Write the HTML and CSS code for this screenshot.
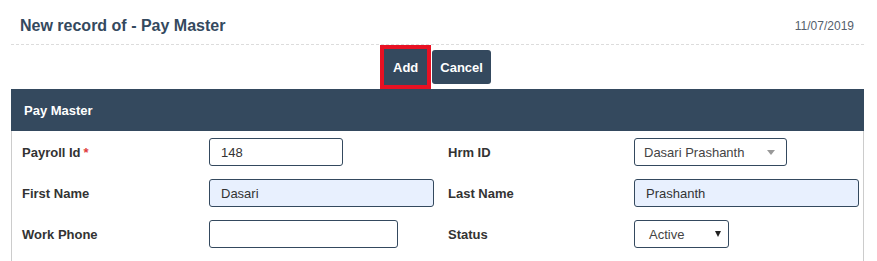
FILE: index.html
```html
<!DOCTYPE html>
<html lang="en">
<head>
    <meta charset="UTF-8">
    <meta name="viewport" content="width=device-width, initial-scale=1.0">
    <title>New record of - Pay Master</title>
    <link rel="stylesheet" href="styles.css">
</head>
<body>
    <div class="page">
        <div class="title-bar">
            <h1>New record of - Pay Master</h1>
            <span class="date">11/07/2019</span>
        </div>

        <div class="actions">
            <button type="submit" class="btn btn-add">Add</button>
            <button type="button" class="btn">Cancel</button>
        </div>

        <div class="panel">
            <div class="panel-head">Pay Master</div>
            <div class="panel-body">
                <label>Payroll Id <span class="req">*</span></label>
                <div class="field"><input type="text" class="w-sm" value="148"></div>
                <label>Hrm ID</label>
                <div class="field">
                    <div class="combo">
                        <span>Dasari Prashanth</span>
                        <span class="combo-arrow"></span>
                    </div>
                </div>

                <label>First Name</label>
                <div class="field"><input type="text" class="w-lg filled" value="Dasari"></div>
                <label>Last Name</label>
                <div class="field"><input type="text" class="w-lg filled" value="Prashanth"></div>

                <label>Work Phone</label>
                <div class="field"><input type="text" class="w-md"></div>
                <label>Status</label>
                <div class="field">
                    <div class="status">
                        <span>Active</span>
                        <span class="status-arrow"></span>
                    </div>
                </div>
            </div>
        </div>
    </div>
</body>
</html>
```

FILE: styles.css
```css
* {
    margin: 0;
    padding: 0;
    box-sizing: border-box;
}

body {
    font-family: 'Liberation Sans', Arial, sans-serif;
    background-color: #fff;
    color: #333;
}

.page {
    margin: 0 13px 0 11px;
}

.title-bar {
    height: 45px;
    display: flex;
    justify-content: space-between;
    align-items: center;
    padding: 8px 10px 0 9px;
    border-bottom: 1px dashed #dcdcdc;
}

h1 {
    font-size: 16px;
    font-weight: bold;
    color: #34495e;
}

.date {
    font-size: 12px;
    color: #55606c;
}

.actions {
    height: 44px;
    display: flex;
    justify-content: center;
    align-items: center;
    gap: 5px;
    padding-left: 0;
}

.btn {
    height: 34px;
    padding: 0 8px;
    background-color: #34495e;
    color: #fff;
    border: none;
    border-radius: 3px;
    font-family: inherit;
    font-size: 13px;
    font-weight: bold;
}

.btn-add {
    padding: 0 9px;
    height: 36px;
    border-radius: 0;
    outline: 4px solid #e81123;
}

.panel {
    border: 1px solid #ccc;
    border-top: none;
}

.panel-head {
    height: 42px;
    background-color: #34495e;
    color: #fff;
    font-size: 13px;
    font-weight: bold;
    padding: 0 13px;
    display: flex;
    align-items: center;
    margin: 0 -1px;
}

.panel-body {
    display: grid;
    grid-template-columns: 187px 239px 186px 1fr;
    grid-auto-rows: 41px;
    padding: 7px 0 8px 10px;
}

.panel-body label {
    font-size: 13px;
    font-weight: bold;
    color: #333;
    display: flex;
    align-items: center;
    height: 28px;
    gap: 3px;
}

.req {
    color: #e03c3c;
}

.field {
    height: 28px;
}

input[type="text"] {
    height: 28px;
    padding: 0 11px;
    border: 1px solid #34495e;
    border-radius: 3px;
    font-family: inherit;
    font-size: 13px;
    color: #333;
    background-color: #fff;
    outline: none;
}

.w-sm {
    width: 134px;
}

.w-md {
    width: 189px;
}

.w-lg {
    width: 225px;
}

.filled {
    background-color: #e8f0fe !important;
}

.combo, .status {
    height: 28px;
    border: 1px solid #34495e;
    border-radius: 3px;
    display: flex;
    align-items: center;
    justify-content: space-between;
    font-size: 13px;
    color: #444;
}

.combo {
    width: 153px;
    padding: 0 11px 0 9px;
}

.combo-arrow {
    width: 0;
    height: 0;
    border-left: 4px solid transparent;
    border-right: 4px solid transparent;
    border-top: 5px solid #999;
}

.status {
    width: 95px;
    padding: 0 7px 0 14px;
}

.status-arrow {
    width: 0;
    height: 0;
    border-left: 3px solid transparent;
    border-right: 3px solid transparent;
    border-top: 6px solid #222;
}
```
